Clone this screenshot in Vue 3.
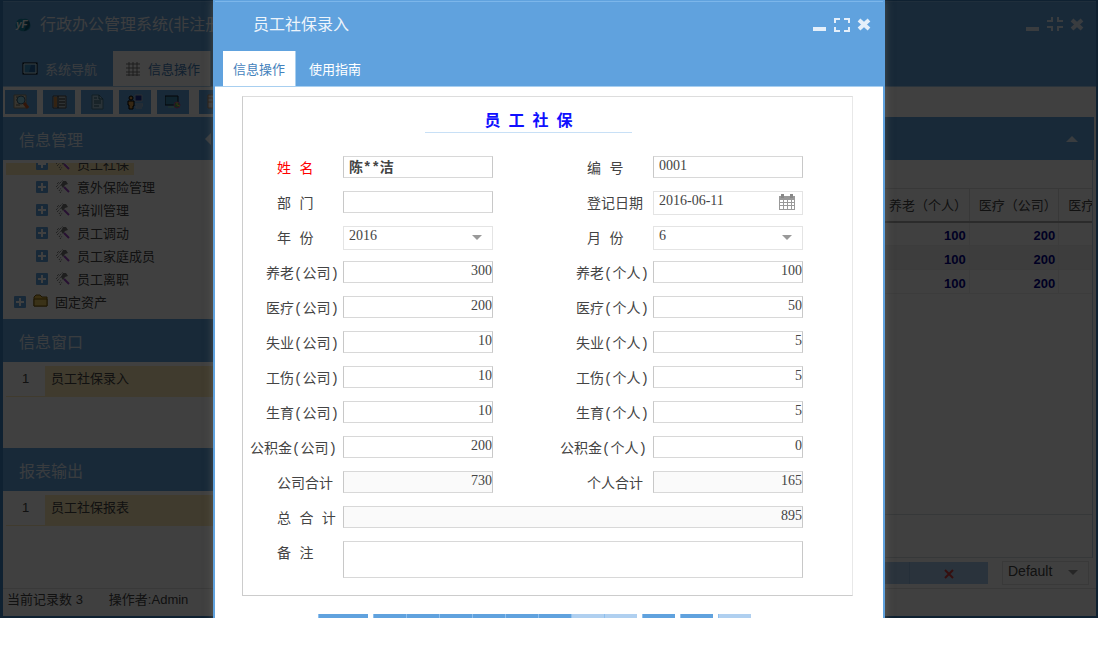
<script setup>
import { ref } from 'vue'

const toolbar = ['预览', '列表', '文档', '人员', '监控', '表格']
const tree = ['员工社保', '意外保险管理', '培训管理', '员工调动', '员工家庭成员', '员工离职']
const records = [
  { pension: 100, medical: 200 },
  { pension: 100, medical: 200 },
  { pension: 100, medical: 200 },
]

const person = ref('陈**洁')
const code = ref('0001')
const dept = ref('')
const date = ref('2016-06-11')
const year = ref('2016')
const month = ref('6')
const remark = ref('')
const total = ref('895')
const theme = ref('Default')

const amounts = ref([
  { id: 'pension', name: '养老', kind: 'pair', company: '300', own: '100' },
  { id: 'medical', name: '医疗', kind: 'pair', company: '200', own: '50' },
  { id: 'jobless', name: '失业', kind: 'pair', company: '10', own: '5' },
  { id: 'injury', name: '工伤', kind: 'pair', company: '10', own: '5' },
  { id: 'birth', name: '生育', kind: 'pair', company: '10', own: '5' },
  { id: 'fund', name: '公积金', kind: 'fund', company: '200', own: '0' },
])
const sums = ref({ company: '730', own: '165' })

const actions = [
  [{ name: '新增', wide: true }],
  [
    { name: '首条' }, { name: '上一条' }, { name: '下一条' }, { name: '末条' },
    { name: '添加' }, { name: '修改' }, { name: '保存', off: true }, { name: '取消', off: true },
  ],
  [{ name: '查找' }],
  [{ name: '打印' }],
  [{ name: '删除', off: true }],
]
</script>

<template>
  <div class="screen">
    <div class="window">
      <header class="win-head">
        <div class="title-row">
          <svg class="logo" viewBox="0 0 16 16" aria-hidden="true">
            <path d="M2 4Q4 1 8 2Q14 1 15 6Q17 12 11 14Q4 15 1 10Q0 7 2 4Z" fill="#1787a8" />
            <path d="M10 3Q15 3 15 8Q14 13 9 14Q12 9 10 3Z" fill="#0c5876" />
            <text x="1" y="11" font-size="10" font-weight="bold" font-style="italic" fill="#fff">yF</text>
          </svg>
          <h1>行政办公管理系统(非注册版)</h1>
          <div class="controls">
            <button aria-label="最小化"><svg viewBox="0 0 16 16"><path d="M1 10h13v4H1z" /></svg></button>
            <button aria-label="还原"><svg viewBox="0 0 16 16"><path d="M4 0h2v5H0V3h4zM10 0h2v3h4v2h-6zM0 9h6v5H4v-3H0zM10 9h6v2h-4v3h-2z" /></svg></button>
            <button aria-label="关闭"><svg viewBox="0 0 16 16"><path d="M3 3l10 9M13 3L3 12" class="cross" /></svg></button>
          </div>
        </div>
        <nav class="tabs">
          <button class="tab nav-tab">
            <svg viewBox="0 0 16 16" aria-hidden="true">
              <rect x="1" y="2" width="14" height="11" fill="#3d94c8" stroke="#000" stroke-width="1" />
              <path d="M2 3h12v9H2z" fill="none" stroke="#d4e2ec" />
              <path d="M9 4h4v7h-6z" fill="#2467a8" />
            </svg>系统导航
          </button>
          <button class="tab nav-tab active">
            <svg viewBox="0 0 16 16" aria-hidden="true">
              <path d="M4 1v14M8 1v14M12 1v14M1 3h14M1 7h14M1 11h14M1 14h14" stroke="#777" fill="none" />
            </svg>信息操作
          </button>
        </nav>
      </header>

      <div class="toolbar">
        <button v-for="(name, i) in toolbar" :key="name" :aria-label="name" :class="{ apart: i === 5 }">
          <svg v-if="i === 0" viewBox="0 0 16 16">
            <path d="M1 1h12v13H1z" fill="#ddd3bd" stroke="#8a8272" />
            <path d="M3 3h2M3 6h1M3 11h4" stroke="#665" />
            <circle cx="8" cy="6" r="4" fill="#8fd2e8" stroke="#3a647c" />
            <path d="M11 9l4 5" stroke="#c85a28" stroke-width="3" />
          </svg>
          <svg v-else-if="i === 1" viewBox="0 0 16 16">
            <path d="M2 2h13v12H2z" fill="#b7c8d0" stroke="#5a5048" />
            <path d="M3 3h3v10H3z" fill="#d08a4a" />
            <path d="M8 5h6M8 8h6M8 11h6M7 2v12" stroke="#222" />
          </svg>
          <svg v-else-if="i === 2" viewBox="0 0 16 16">
            <path d="M3 1h7l4 4v10H3z" fill="#a4c8da" stroke="#4d7a92" />
            <path d="M10 1v4h4M5 4h3M5 7h7M5 9h7M5 12h5" stroke="#23566e" fill="none" />
          </svg>
          <svg v-else-if="i === 3" viewBox="0 0 16 16">
            <path d="M8 1h7v6H8z" fill="#1c3298" stroke="#aab8c8" />
            <path d="M8 10h8v2H9v2h6" stroke="#b5bec8" fill="none" />
            <circle cx="4" cy="4" r="2" fill="#d89d4c" stroke="#000" />
            <path d="M1 7h6v5H6v3H2v-4H1z" fill="#d89d4c" stroke="#000" />
          </svg>
          <svg v-else-if="i === 4" viewBox="0 0 16 16">
            <path d="M0 2h13v9H0z" fill="#3d8cb4" stroke="#101820" />
            <path d="M3 13h7" stroke="#8da" />
            <circle cx="12" cy="11" r="3" fill="#52a45c" stroke="#b44c9c" />
            <path d="M12 8v3l3 1" stroke="#e8c040" fill="none" />
          </svg>
          <svg v-else viewBox="0 0 16 16">
            <path d="M1 1h13v13H1z" fill="#ddd" stroke="#a67a58" />
            <path d="M1 4h13M1 8h13M6 4v10" stroke="#a67a58" />
          </svg>
        </button>
      </div>

      <div class="body">
        <aside class="side">
          <section class="panel grow">
            <h2>信息管理 <svg viewBox="0 0 8 12" aria-hidden="true"><path d="M7 0v12L1 6z" /></svg></h2>
            <div class="tree-view">
              <ul class="tree">
                <li v-for="(item, i) in tree" :key="item" :class="{ chosen: i === 0 }">
                  <span class="plus"></span>
                  <svg viewBox="0 0 16 16" aria-hidden="true">
                    <path d="M2 5l2-2M1 8l7-7M2 10l6-6M4 12l2-3M5 14l2-3" stroke="#555" stroke-dasharray="1 1" fill="none" />
                    <path d="M8 2h3l2 3-3 1-2 3-2-3z" fill="#777" />
                    <path d="M9 8l5 5" stroke="#9d45c4" stroke-width="2" />
                    <path d="M10 7l4 4" stroke="#eee" />
                  </svg>
                  <span>{{ item }}</span>
                </li>
                <li class="root">
                  <span class="plus"></span>
                  <svg viewBox="0 0 16 16" aria-hidden="true">
                    <path d="M1 12V3l2-2h4l2 2h5v9z" fill="#e6bd48" stroke="#775a0c" />
                    <path d="M1 12V5h13v7z" fill="#e8c860" stroke="#775a0c" />
                  </svg>
                  <span>固定资产</span>
                </li>
              </ul>
            </div>
          </section>
          <section class="panel short">
            <h2>信息窗口</h2>
            <div class="entry"><span>1</span><a href="#entry">员工社保录入</a></div>
          </section>
          <section class="panel short">
            <h2>报表输出</h2>
            <div class="entry"><span>1</span><a href="#report">员工社保报表</a></div>
          </section>
        </aside>

        <main class="main">
          <div class="main-head"><svg viewBox="0 0 12 6" aria-hidden="true"><path d="M0 6l6-6 6 6z" /></svg></div>
          <div class="grid-view">
            <table>
              <colgroup><col class="lead" /><col /><col /><col /></colgroup>
              <thead>
                <tr><th></th><th>养老（个人）</th><th>医疗（公司）</th><th>医疗（个人）</th></tr>
              </thead>
              <tbody>
                <tr v-for="(r, i) in records" :key="i">
                  <td></td><td>{{ r.pension }}</td><td>{{ r.medical }}</td><td></td>
                </tr>
              </tbody>
            </table>
            <div class="summary"></div>
          </div>
          <div class="pager">
            <button class="pale" aria-label="取消"></button>
            <button class="pale last" aria-label="删除">
              <svg viewBox="0 0 12 12"><path d="M2 2l8 8M10 2l-8 8" stroke="#d43c3c" stroke-width="2" /></svg>
            </button>
            <div class="picker theme">
              <select v-model="theme" aria-label="主题"><option>Default</option></select>
              <svg viewBox="0 0 10 5" aria-hidden="true"><path d="M0 0h10L5 5z" /></svg>
            </div>
          </div>
        </main>
      </div>

      <footer class="status"><span>当前记录数 <b>3</b></span><span>操作者:<b>Admin</b></span></footer>
    </div>

    <div class="mask"></div>

    <div class="dialog" role="dialog" aria-labelledby="dialog-title">
      <header class="dialog-head">
        <div class="title-row">
          <h2 id="dialog-title">员工社保录入</h2>
          <div class="controls">
            <button aria-label="最小化"><svg viewBox="0 0 16 16"><path d="M1 10h13v4H1z" /></svg></button>
            <button aria-label="最大化"><svg viewBox="0 0 16 16"><path d="M0 1h6v2H2v3H0zM10 1h6v5h-2V3h-4zM0 10h2v3h4v2H0zM14 10h2v5h-6v-2h4z" /></svg></button>
            <button aria-label="关闭"><svg viewBox="0 0 16 16"><path d="M3 3l10 9M13 3L3 12" class="cross" /></svg></button>
          </div>
        </div>
        <nav class="tabs">
          <button class="tab active">信息操作</button>
          <button class="tab">使用指南</button>
        </nav>
      </header>

      <div class="dialog-body">
        <form class="sheet" @submit.prevent>
          <h3>员&nbsp;&nbsp;工&nbsp;&nbsp;社&nbsp;&nbsp;保</h3>
          <div class="fields">
            <label for="person" class="required">姓 名</label>
            <input id="person" v-model="person" class="strong" />
            <label for="code" class="second">编 号</label>
            <input id="code" v-model="code" />

            <label for="dept">部 门</label>
            <input id="dept" v-model="dept" />
            <label for="date" class="second">登记日期</label>
            <div class="picker">
              <input id="date" v-model="date" />
              <svg class="calendar" viewBox="0 0 16 16" aria-hidden="true">
                <path d="M0 2h16v14H0z" fill="#999" />
                <path d="M1 6h3v2H1zM5 6h3v2H5zM9 6h3v2H9zM13 6h2v2h-2zM1 9h3v2H1zM5 9h3v2H5zM9 9h3v2H9zM13 9h2v2h-2zM1 12h3v3H1zM5 12h3v3H5zM9 12h3v3H9zM13 12h2v3h-2z" fill="#fff" />
                <path d="M2 0h3v4H2zM11 0h3v4h-3z" fill="#888" />
              </svg>
            </div>

            <label for="year">年 份</label>
            <div class="picker">
              <select id="year" v-model="year"><option>2016</option></select>
              <svg viewBox="0 0 10 5" aria-hidden="true"><path d="M0 0h10L5 5z" /></svg>
            </div>
            <label for="month" class="second">月 份</label>
            <div class="picker">
              <select id="month" v-model="month"><option>6</option></select>
              <svg viewBox="0 0 10 5" aria-hidden="true"><path d="M0 0h10L5 5z" /></svg>
            </div>

            <template v-for="a in amounts" :key="a.id">
              <label :for="a.id + '-company'" :class="a.kind">{{ a.name }}(公司)</label>
              <input :id="a.id + '-company'" v-model="a.company" class="number" />
              <label :for="a.id + '-own'" :class="[a.kind, 'second']">{{ a.name }}(个人)</label>
              <input :id="a.id + '-own'" v-model="a.own" class="number" />
            </template>

            <label for="sum-company">公司合计</label>
            <input id="sum-company" v-model="sums.company" class="number" readonly />
            <label for="sum-own" class="second">个人合计</label>
            <input id="sum-own" v-model="sums.own" class="number" readonly />

            <label for="total">总 合 计</label>
            <input id="total" v-model="total" class="number span" readonly />

            <label for="remark">备 注</label>
            <textarea id="remark" v-model="remark" class="span"></textarea>
          </div>
        </form>

        <div class="actions">
          <div v-for="(group, g) in actions" :key="g" class="group">
            <button v-for="b in group" :key="b.name" :aria-label="b.name" :class="{ wide: b.wide, off: b.off }"></button>
          </div>
        </div>
      </div>
    </div>
  </div>
</template>

<style>
body {
  background: #fff;
}
</style>

<style scoped>
* {
  box-sizing: border-box;
}
.screen {
  position: relative;
  height: calc(100vh - 37px);
  min-height: 560px;
  overflow: hidden;
  font-family: "Liberation Sans", "Noto Sans CJK SC", sans-serif;
  font-size: 13px;
  color: #444;
}
h1, h2, h3, ul {
  margin: 0;
  padding: 0;
  font-weight: normal;
  list-style: none;
}
button, input, select, textarea {
  margin: 0;
  padding: 0;
  border: 0;
  border-radius: 0;
  background: none;
  font: inherit;
  color: inherit;
  appearance: none;
  outline: none;
}

/* main window */
.window {
  display: flex;
  flex-direction: column;
  height: 100%;
  border: 2px solid #3f84c4;
  border-top-width: 1px;
  border-left-width: 3px;
  background: #fff;
}
.mask {
  position: absolute;
  inset: 0;
  background: rgba(0, 0, 0, 0.75);
}
.win-head, .dialog-head {
  flex: none;
  background: #60a2de;
  border-top: 1px solid #7cb6ea;
  border-bottom: 1px solid #a8cff0;
}
.title-row {
  display: flex;
  align-items: center;
  height: 49px;
  padding: 0 11px 4px 12px;
  color: #edf4fb;
}
.title-row h1, .title-row h2 {
  flex: 1;
  font-size: 16px;
  line-height: 24px;
}
.logo {
  width: 16px;
  height: 16px;
  margin-right: 9px;
}
.controls {
  display: flex;
  gap: 6px;
}
.controls button {
  width: 16px;
  height: 16px;
}
.controls svg {
  display: block;
  width: 16px;
  height: 16px;
  fill: #e4effa;
}
.cross {
  stroke: #e4effa;
  stroke-width: 4;
  fill: none;
}
.tabs {
  display: flex;
  height: 35px;
}
.tab {
  padding: 0 10px;
  color: #fff;
}
.tab.active {
  background: #fff;
  border-right: 1px solid #a8cff0;
  color: #4482bc;
}
.nav-tab {
  display: flex;
  align-items: center;
  gap: 7px;
  padding: 0 10px 0 12px;
  color: #e4effa;
}
.win-head .tabs {
  padding-left: 7px;
}
.nav-tab:first-child {
  padding-right: 16px;
}
.nav-tab svg {
  width: 16px;
  height: 16px;
}

.toolbar {
  display: flex;
  flex: none;
  align-items: center;
  gap: 6px;
  height: 30px;
  padding-left: 2px;
  overflow: hidden;
}
.toolbar button {
  display: flex;
  flex: none;
  align-items: center;
  justify-content: center;
  width: 32px;
  height: 24px;
  background: #60a2de;
}
.toolbar svg {
  width: 16px;
  height: 16px;
}
.toolbar .apart {
  margin-left: 4px;
}
.body {
  display: flex;
  flex: 1;
  min-height: 0;
}
.side {
  display: flex;
  flex: none;
  flex-direction: column;
  width: 211px;
}
.panel h2, .main-head {
  display: flex;
  flex: none;
  align-items: center;
  justify-content: space-between;
  height: 43px;
  padding: 0 2px 0 16px;
  background: #60a2de;
  color: #e4effa;
  font-size: 16px;
}
.panel h2 svg {
  width: 8px;
  height: 12px;
  fill: #e4effa;
}
.panel.grow {
  display: flex;
  flex: 1;
  flex-direction: column;
  min-height: 0;
}
.panel.short {
  flex: none;
  height: 129px;
}
.panel.short:last-child {
  height: 140px;
}
.tree-view {
  flex: 1;
  margin-top: 3px;
  overflow: hidden;
}
.tree {
  margin-top: -11px;
}
.tree li {
  display: flex;
  align-items: center;
  height: 23px;
  margin: 0 80px 0 3px;
  padding-left: 30px;
  white-space: nowrap;
}
.tree .chosen {
  background: #ffecb8;
}
.tree .root {
  padding-left: 8px;
}
.tree svg {
  flex: none;
  width: 16px;
  height: 16px;
  margin: 0 6px 0 7px;
}
.plus {
  flex: none;
  width: 12px;
  height: 12px;
  border-radius: 1px;
  background:
    linear-gradient(#fff, #fff) center / 8px 2px no-repeat,
    linear-gradient(#fff, #fff) center / 2px 8px no-repeat,
    #60a2de;
}
.entry {
  display: flex;
  height: 31px;
  margin: 4px 0 0 3px;
  border-bottom: 1px solid #ffecb8;
  line-height: 26px;
}
.entry span {
  width: 39px;
  text-align: center;
}
.entry a {
  flex: 1;
  padding-left: 6px;
  background: #ffecb8;
  color: inherit;
  text-decoration: none;
}

.main {
  display: flex;
  flex: 1;
  flex-direction: column;
  min-width: 0;
  margin: 0 2px 0 5px;
}
.main-head {
  padding-right: 16px;
  justify-content: flex-end;
}
.main-head svg {
  width: 12px;
  height: 6px;
  fill: #e4effa;
}
.grid-view {
  display: flex;
  flex: 1;
  flex-direction: column;
  justify-content: space-between;
  margin-right: 1px;
  padding-top: 28px;
  border-right: 1px solid #b8cfe4;
  overflow: hidden;
}
table {
  width: 930px;
  table-layout: fixed;
  border-collapse: collapse;
}
.lead {
  width: 660px;
}
th {
  height: 33px;
  padding: 0 0 0 9px;
  border: 1px solid #ddd;
  border-bottom: 2px solid #aaa;
  font-weight: normal;
  text-align: left;
  white-space: nowrap;
}
td {
  height: 24px;
  padding: 3px 3px 0 0;
  border: 1px solid #eee;
  color: #00008c;
  font-weight: bold;
  text-align: right;
}
tbody tr:nth-child(even) {
  background: #f4f4f4;
}
.summary {
  height: 44px;
  border-top: 1px solid #d5dde4;
  border-bottom: 1px solid #d5dde4;
}
.pager {
  display: flex;
  flex: none;
  align-items: center;
  justify-content: flex-end;
  height: 30px;
  padding-right: 5px;
}
.pale {
  width: 79px;
  height: 22px;
  border-left: 1px solid #93bce4;
  background: #a8cbed;
}
.pale svg {
  width: 12px;
  height: 12px;
  vertical-align: middle;
}
.theme {
  width: 87px;
  margin-left: 14px;
}
.status {
  display: flex;
  flex: none;
  gap: 26px;
  height: 28px;
  padding: 0 4px;
  border-top: 1px solid #e4e4e4;
  line-height: 22px;
}
.status b {
  font-weight: normal;
}

/* entry dialog */
.dialog {
  position: absolute;
  top: 0;
  right: 0;
  left: 0;
  width: 672px;
  max-width: 100%;
  margin: 0 auto;
  border: 2px solid #60a2de;
  border-top-width: 1px;
  background: #fff;
  box-shadow: 0 0 8px rgba(120, 120, 110, 0.5);
}
.dialog-head .title-row {
  padding-left: 38px;
}
.dialog-head .tabs {
  padding-left: 8px;
}
.dialog-head .tab {
  min-width: 72px;
}
.dialog-head .tab + .tab {
  padding-left: 13px;
}
.dialog-body {
  padding: 9px 30px 0 27px;
}
.sheet {
  padding: 12px 49px 17px 0;
  border: 1px solid #ccc;
  border-top-color: #ddd;
  border-right-color: #e8e8e8;
}
.sheet h3 {
  width: 207px;
  margin: 0 0 23px 182px;
  border-bottom: 1px solid #c8e0f6;
  color: #1010ff;
  font-family: "Liberation Serif", "Noto Sans CJK SC", sans-serif;
  font-size: 16px;
  font-weight: bold;
  line-height: 23px;
  text-align: center;
}
.fields {
  display: grid;
  grid-template-columns: 100px 150px 160px 1fr;
  row-gap: 11px;
  grid-auto-rows: minmax(24px, auto);
  align-items: start;
}
label {
  padding-left: 34px;
  font-family: "Liberation Mono", "Noto Sans CJK SC", monospace;
  font-size: 14px;
  line-height: 27px;
  height: 24px;
  white-space: nowrap;
}
label.pair {
  padding-left: 23px;
}
label.fund {
  padding-left: 7px;
}
label.second {
  margin-left: 60px;
}
label.required {
  color: #f00;
}
.fields input, .fields textarea, .picker select {
  display: block;
  width: 100%;
  height: 22px;
  padding: 0 5px 3px;
  border: 1px solid #c8c8c8;
  border-top-color: #d8d8d8;
  border-bottom-color: #d8d8d8;
  font-family: "Liberation Serif", "Noto Sans CJK SC", serif;
  font-size: 14px;
  color: #444;
}
.fields input.number {
  padding-right: 0;
  text-align: right;
}
.fields input.strong {
  font-family: "Liberation Mono", "Noto Sans CJK SC", monospace;
  font-weight: bold;
}
.fields input[readonly] {
  background: #fafafa;
}
.fields .span {
  grid-column: 2 / 5;
}
.fields textarea {
  height: 37px;
  resize: none;
}
.picker {
  position: relative;
}
.picker select, .fields .picker input {
  height: 24px;
  padding-bottom: 5px;
  border-color: #e4e4e4;
}
.theme select {
  font-family: inherit;
}
.picker svg {
  position: absolute;
  top: 9px;
  right: 11px;
  width: 10px;
  height: 5px;
  fill: #999;
  pointer-events: none;
}
.picker .calendar {
  top: 3px;
  right: 8px;
  width: 16px;
  height: 16px;
}
.actions {
  display: flex;
  gap: 5px;
  padding: 18px 0 0 76px;
}
.group {
  display: flex;
}
.actions button {
  width: 33px;
  height: 28px;
  border-left: 1px solid #8fc0ee;
  background: #60a2de;
}
.actions .wide {
  width: 50px;
}
.actions .off {
  background: #b0d0f0;
}
</style>
